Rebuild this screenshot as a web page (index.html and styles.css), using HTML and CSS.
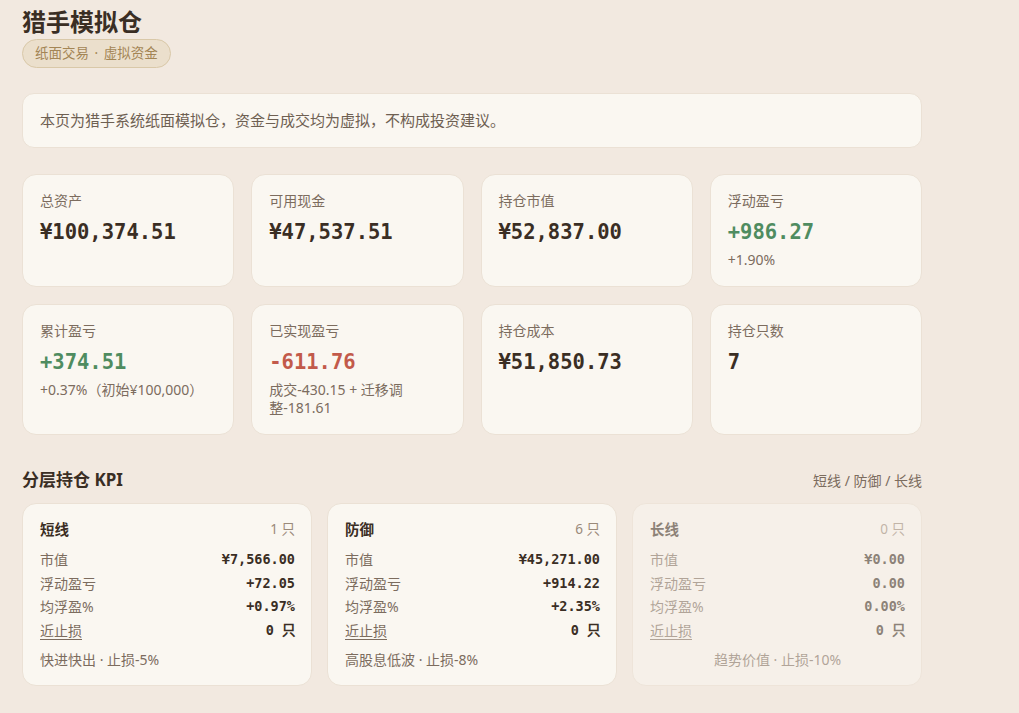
FILE: index.html
```html
<!DOCTYPE html>
<html lang="zh-CN">
<head>
  <meta charset="UTF-8">
  <title>猎手模拟仓</title>
  <link rel="stylesheet" href="styles.css">
</head>
<body>
  <div class="page">
    <header class="top">
      <h1>猎手模拟仓</h1>
      <span class="badge">纸面交易 · 虚拟资金</span>
    </header>

    <div class="notice">本页为猎手系统纸面模拟仓，资金与成交均为虚拟，不构成投资建议。</div>

    <div class="stats">
      <div class="stat">
        <div class="stat-label">总资产</div>
        <div class="stat-value">¥100,374.51</div>
      </div>
      <div class="stat">
        <div class="stat-label">可用现金</div>
        <div class="stat-value">¥47,537.51</div>
      </div>
      <div class="stat">
        <div class="stat-label">持仓市值</div>
        <div class="stat-value">¥52,837.00</div>
      </div>
      <div class="stat">
        <div class="stat-label">浮动盈亏</div>
        <div class="stat-value up">+986.27</div>
        <div class="stat-sub">+1.90%</div>
      </div>
      <div class="stat">
        <div class="stat-label">累计盈亏</div>
        <div class="stat-value up">+374.51</div>
        <div class="stat-sub">+0.37%（初始¥100,000）</div>
      </div>
      <div class="stat">
        <div class="stat-label">已实现盈亏</div>
        <div class="stat-value down">-611.76</div>
        <div class="stat-sub">成交-430.15 + 迁移调整-181.61</div>
      </div>
      <div class="stat">
        <div class="stat-label">持仓成本</div>
        <div class="stat-value">¥51,850.73</div>
      </div>
      <div class="stat">
        <div class="stat-label">持仓只数</div>
        <div class="stat-value">7</div>
      </div>
    </div>

    <div class="section-head">
      <h2>分层持仓 KPI</h2>
      <span class="section-hint">短线 / 防御 / 长线</span>
    </div>

    <div class="tiers">
      <div class="tier">
        <div class="tier-head"><b>短线</b><span>1 只</span></div>
        <div class="tier-row"><span>市值</span><b>¥7,566.00</b></div>
        <div class="tier-row"><span>浮动盈亏</span><b>+72.05</b></div>
        <div class="tier-row"><span>均浮盈%</span><b>+0.97%</b></div>
        <div class="tier-row"><span class="dotted">近止损</span><b>0 只</b></div>
        <div class="tier-foot">快进快出 · 止损-5%</div>
      </div>
      <div class="tier">
        <div class="tier-head"><b>防御</b><span>6 只</span></div>
        <div class="tier-row"><span>市值</span><b>¥45,271.00</b></div>
        <div class="tier-row"><span>浮动盈亏</span><b>+914.22</b></div>
        <div class="tier-row"><span>均浮盈%</span><b>+2.35%</b></div>
        <div class="tier-row"><span class="dotted">近止损</span><b>0 只</b></div>
        <div class="tier-foot">高股息低波 · 止损-8%</div>
      </div>
      <div class="tier empty">
        <div class="tier-head"><b>长线</b><span>0 只</span></div>
        <div class="tier-row"><span>市值</span><b>¥0.00</b></div>
        <div class="tier-row"><span>浮动盈亏</span><b>0.00</b></div>
        <div class="tier-row"><span>均浮盈%</span><b>0.00%</b></div>
        <div class="tier-row"><span class="dotted">近止损</span><b>0 只</b></div>
        <div class="tier-foot">趋势价值 · 止损-10%</div>
      </div>
    </div>
  </div>
</body>
</html>
```

FILE: styles.css
```css
body {
  margin: 0;
  background: #f2e9e0;
  color: #3a2e24;
  font-family: "Noto Sans", "Noto Sans CJK SC", sans-serif;
}
.page {
  max-width: 900px;
  padding: 6px 22px 30px;
}
.top h1 {
  margin: 0;
  font-size: 24px;
  line-height: 32px;
  font-weight: 700;
  color: #3a2e24;
}
.badge {
  display: inline-block;
  margin-top: 1px;
  padding: 4px 12px;
  font-size: 13.5px;
  line-height: 19px;
  word-spacing: 2px;
  color: #a38555;
  background: #ebdfcc;
  border: 1px solid #d9c8a8;
  border-radius: 999px;
}
.notice {
  margin-top: 25px;
  padding: 16px 17px;
  font-size: 15px;
  line-height: 21px;
  color: #6e6052;
  background: #faf7f1;
  border: 1px solid #ebe1d5;
  border-radius: 12px;
}
.stats {
  margin-top: 26px;
  display: grid;
  grid-template-columns: repeat(4, 1fr);
  gap: 17px;
}
.stat {
  padding: 17px;
  background: #faf7f1;
  border: 1px solid #ebe1d5;
  border-radius: 14px;
}
.stat-label {
  font-size: 14px;
  line-height: 18px;
  color: #7c6c5e;
}
.stat-value {
  margin-top: 7px;
  font-family: "DejaVu Sans Mono", monospace;
  font-size: 20.5px;
  line-height: 30px;
  font-weight: 700;
  color: #3a2e24;
}
.stat-value.up { color: #4f8c60; }
.stat-value.down { color: #c25a4a; }
.stat-sub {
  margin-top: 4px;
  font-size: 14px;
  line-height: 18px;
  color: #7c6c5e;
}
.section-head {
  margin-top: 33px;
  display: flex;
  justify-content: space-between;
  align-items: center;
}
.section-head h2 {
  margin: 0;
  font-size: 17px;
  line-height: 24px;
  font-weight: 700;
  color: #3a2e24;
}
.section-hint {
  font-size: 14px;
  color: #7c6c5e;
}
.tiers {
  margin-top: 11px;
  display: grid;
  grid-template-columns: repeat(3, 1fr);
  gap: 15px;
}
.tier {
  padding: 15px 16px 15px 17px;
  background: #faf7f1;
  border: 1px solid #ebe1d5;
  border-radius: 14px;
}
.tier.empty {
  opacity: 0.55;
}
.tier-head {
  display: flex;
  justify-content: space-between;
  align-items: center;
  line-height: 20px;
  margin-bottom: 9px;
}
.tier-head b {
  font-size: 14.5px;
  color: #3a2e24;
}
.tier-head span {
  font-size: 13.5px;
  color: #9a8a7a;
}
.tier-row {
  display: flex;
  justify-content: space-between;
  align-items: center;
  line-height: 23.7px;
  font-size: 14px;
  color: #7c6c5e;
}
.tier-row b {
  font-family: "DejaVu Sans Mono", monospace;
  font-size: 13.5px;
  color: #3a2e24;
}
.dotted {
  text-decoration: underline;
  text-underline-offset: 3px;
}
.tier-foot {
  margin-top: 7px;
  font-size: 14px;
  line-height: 20px;
  color: #7c6c5e;
}
.tier.empty .tier-foot {
  text-align: center;
}
```
